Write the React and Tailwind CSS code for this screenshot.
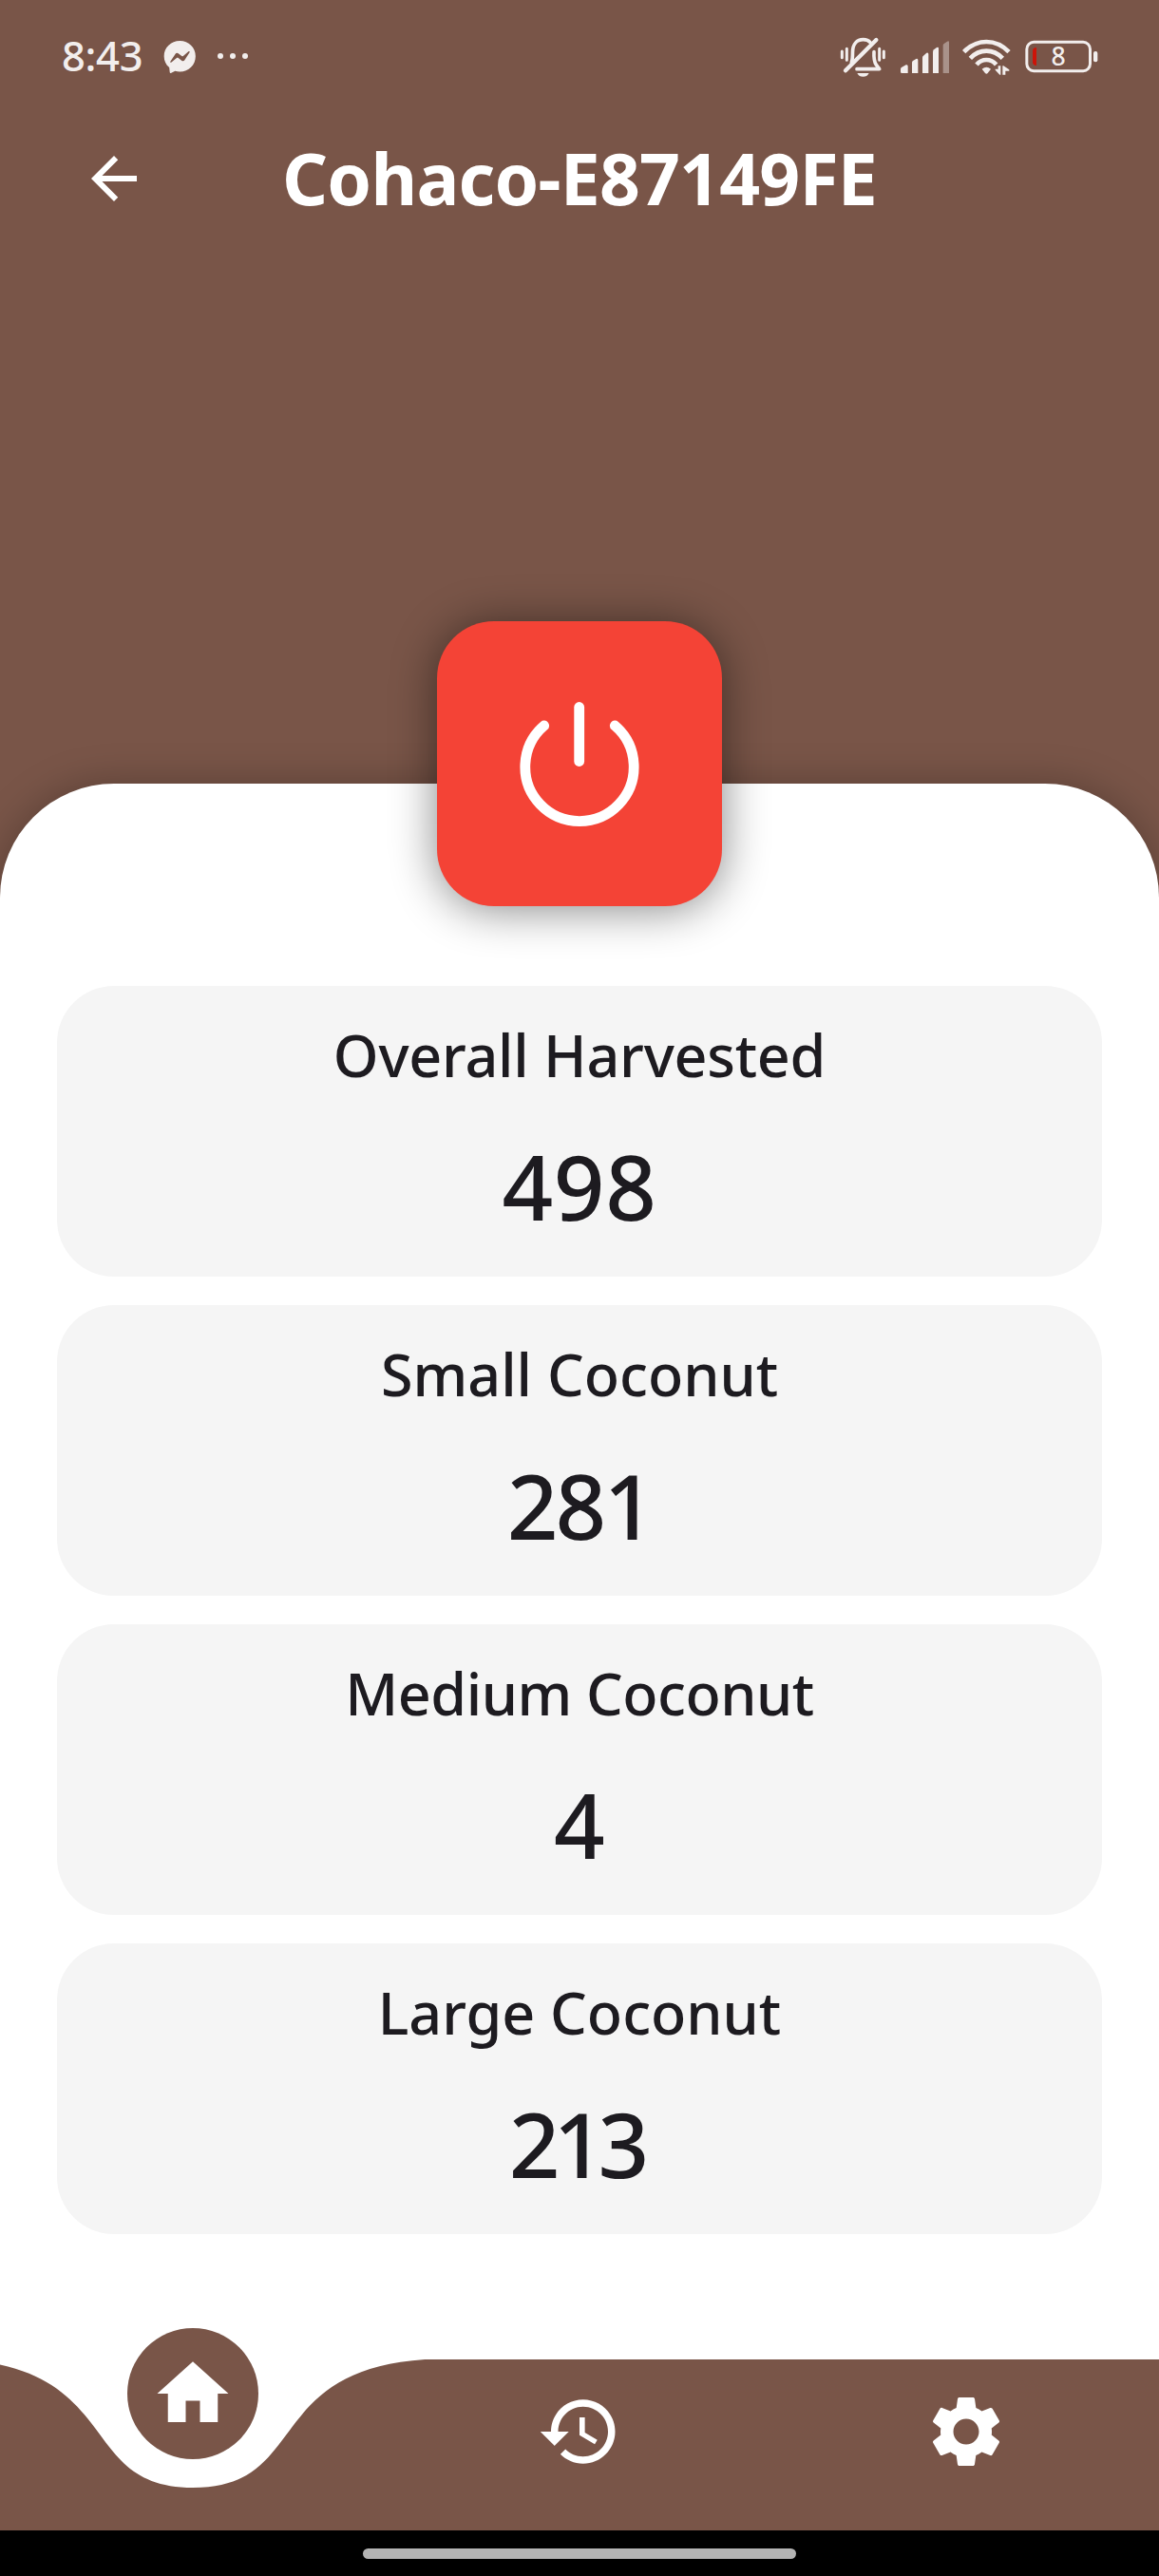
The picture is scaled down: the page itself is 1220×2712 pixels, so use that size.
import React from "react";

const STATS = [
  { label: "Overall Harvested", value: "498", labelClass: "tracking-[-0.25px]", valueClass: "tracking-[0.5px]" },
  { label: "Small Coconut", value: "281", labelClass: "", valueClass: "tracking-[-3px]" },
  { label: "Medium Coconut", value: "4", labelClass: "tracking-[-0.5px]", valueClass: "" },
  { label: "Large Coconut", value: "213", labelClass: "", valueClass: "pr-[8px] tracking-[-7px]" },
];

function MessengerIcon() {
  return (
    <svg className="ml-[22px] h-[80px] w-[34px]" viewBox="400 0 102 240">
      <path
        d="M452 69C424 69 402 90 402 117.500C402 132 408 144 418.500 153L420 167C420.300 170.500 422 171.500 425 170L437 164.500C442 166 447 166.500 452 166.500C480 166.500 501.500 145 501.500 117.500C501.500 90 480 69 452 69Z"
        fill="#f2eeed"
      />
      <path
        d="M422 134L438 110C440 106.500 444 106 447 108.500L458 117C459.500 118 461 118 462.500 117L479 103C481.500 101 484 103 482.500 105.500L467 129.500C465 133 460.500 133.500 457.500 131L447 123C445.500 122 443.500 122 442 123L425.500 136.500C423 138 420.500 136.500 422 134Z"
        fill="#795548"
      />
    </svg>
  );
}

function MutedBellIcon() {
  return (
    <svg className="h-[80px] w-[49px]" viewBox="72 0 147 240" fill="none" stroke="#f2eeed" strokeLinecap="round">
      <path d="M79 102V122M94 94V130M197 94V130M211 102V122" strokeWidth="9" />
      <path d="M109 137C112 130 112.500 124 112.500 105C112.500 79 126 65 146 65C156 65 163 68 168 74" strokeWidth="11" />
      <path d="M180 104C179 122 181 136 187 145C191 151 195 153 197 158H126" strokeWidth="11" strokeLinejoin="round" />
      <path d="M90 163L187 66" strokeWidth="13" />
      <path d="M127 171H164C160 179 154 182.500 145.500 182.500C137 182.500 131 179 127 171Z" fill="#f2eeed" stroke="none" />
    </svg>
  );
}

function SignalIcon() {
  return (
    <svg className="ml-[14px] h-[80px] w-[52px]" viewBox="261 0 156 240" fill="#f2eeed">
      <path d="M264 158Q264 154 268 152L281 145Q287 143 287 149V171H268Q264 171 264 167Z" />
      <path d="M300 138Q300 134 303 132L313 126Q319 124 319 130V171H300Z" />
      <path d="M333 122Q333 118 336 116L346 107Q352 105 352 111V171H333Z" />
      <path d="M366 104Q366 100 369 97L378 90Q384 87 384 93V171H366Z" />
      <path d="M398 84Q398 80 401 78L411 71Q417 68 417 74V171H398Z" opacity="0.4" />
    </svg>
  );
}

function WifiIcon() {
  return (
    <svg className="ml-[14px] h-[80px] w-[51px]" viewBox="459 0 153 240" fill="none" stroke="#f2eeed">
      <path d="M464 104Q495 72 535 72Q575 72 606 104" strokeWidth="14" />
      <path d="M484 124Q506 101 535 101Q564 101 586 124" strokeWidth="14" />
      <path d="M504 144Q517 129 535 129Q553 129 566 144" strokeWidth="14" />
      <path d="M521 158Q535 146 549 158L539 171Q535 176 531 171Z" fill="#f2eeed" stroke="none" />
      <path d="M563 161V158H572V148H580V176H577Z" fill="#f2eeed" stroke="none" />
      <path d="M586 176V148H589L607 160V164H595V176Z" fill="#f2eeed" stroke="none" />
    </svg>
  );
}

function BatteryIcon() {
  return (
    <svg className="ml-[15px] h-[80px] w-[77px]" viewBox="657 0 231 240">
      <rect x="662.500" y="73" width="200" height="91" rx="22" fill="none" stroke="#f2eeed" strokeWidth="9" />
      <path d="M693 90V147C685 147 681 143 681 136V101C681 94 685 90 693 90Z" fill="#cc1408" />
      <rect x="873" y="102" width="13" height="34" rx="6" fill="#f2eeed" />
      <text x="762" y="148" textAnchor="middle" fontSize="80" fontWeight="500" fill="#f2eeed">
        8
      </text>
    </svg>
  );
}

function StatusBar() {
  return (
    <div className="flex h-[120px] items-center justify-between pr-[64px] pl-[65px] text-[#f2eeed]">
      <div className="flex items-center">
        <span className="pb-[2px] text-[43.5px] leading-none font-medium tracking-[-0.3px]">8:43</span>
        <MessengerIcon />
        <div className="ml-[23px] flex gap-[7px] pb-[2px]">
          <span className="size-[6px] rounded-full bg-[#f2eeed]" />
          <span className="size-[6px] rounded-full bg-[#f2eeed]" />
          <span className="size-[6px] rounded-full bg-[#f2eeed]" />
        </div>
      </div>
      <div className="flex items-center">
        <MutedBellIcon />
        <SignalIcon />
        <WifiIcon />
        <BatteryIcon />
      </div>
    </div>
  );
}

function AppBar() {
  return (
    <header className="mt-[18px] grid h-[100px] grid-cols-[72px_1fr_72px] items-center px-[84px]">
      <svg className="size-[72px]" viewBox="0 0 24 24" fill="#ffffff">
        <path d="M20 11H7.830l5.590-5.590L12 4l-8 8 8 8 1.410-1.410L7.830 13H20v-2z" />
      </svg>
      <h1 className="pb-[2px] text-center text-[75px] leading-none font-bold tracking-[-0.8px] whitespace-nowrap text-white">
        Cohaco-E87149FE
      </h1>
    </header>
  );
}

function PowerButton() {
  return (
    <button className="-mt-[171px] flex size-[300px] items-center justify-center rounded-[60px] bg-[#F44336] shadow-[0_3px_48px_rgba(0,0,0,0.48)]">
      <svg className="size-[150px]" viewBox="535 729 150 150" fill="none" stroke="#ffffff" strokeWidth="10.800" strokeLinecap="round">
        <path d="M609.700 744.500V801.500" />
        <path d="M572.700 764A57.200 57.200 0 1 0 647.300 764" />
      </svg>
    </button>
  );
}

function StatCard({ label, value, labelClass, valueClass }) {
  return (
    <div className="flex h-[306px] flex-col items-center rounded-[60px] bg-[#F5F5F5] pt-[33px] text-[#1D1B20]">
      <div className={"text-[61px] leading-[80px] font-medium " + labelClass}>{label}</div>
      <div className={"mt-[38px] text-[94px] leading-[120px] font-medium " + valueClass}>{value}</div>
    </div>
  );
}

function BottomNav() {
  return (
    <nav className="relative h-[180px] shrink-0">
      <svg className="absolute inset-0 h-[180px] w-[1220px]" viewBox="0 0 1220 180">
        <path
          d="M-40.670 0C130.130 11.250 81.330 135 203.330 135C325.330 135 276.530 11.250 447.330 0H1220V180H-50V0Z"
          fill="#795548"
        />
      </svg>
      <div className="relative grid h-full grid-cols-3 justify-items-center">
        <div className="-mt-[33px] flex size-[138px] items-center justify-center rounded-full bg-[#795548]">
          <svg className="size-[90px]" viewBox="0 0 24 24" fill="#ffffff">
            <path d="M10 20v-6h4v6h5v-8h3L12 3 2 12h3v8z" />
          </svg>
        </div>
        <svg className="mt-[31px] size-[90px]" viewBox="0 0 24 24" fill="#ffffff">
          <path d="M13 3c-4.970 0-9 4.030-9 9H1l3.890 3.890.070.140L9 12H6c0-3.870 3.130-7 7-7s7 3.130 7 7-3.130 7-7 7c-1.930 0-3.680-.790-4.940-2.060l-1.420 1.420C8.270 19.990 10.510 21 13 21c4.970 0 9-4.030 9-9s-4.030-9-9-9zm-1 5v5l4.280 2.540.720-1.210-3.500-2.080V8H12z" />
        </svg>
        <svg className="mt-[31px] size-[90px]" viewBox="0 0 24 24" fill="#ffffff">
          <path d="M19.140 12.940c.040-.3.060-.610.060-.940 0-.320-.020-.640-.070-.940l2.030-1.580c.180-.140.230-.410.120-.610l-1.920-3.320c-.120-.220-.370-.290-.590-.220l-2.390.960c-.5-.380-1.030-.7-1.620-.940l-.360-2.540c-.040-.240-.240-.410-.480-.410h-3.840c-.240 0-.430.170-.470.410l-.360 2.540c-.590.240-1.130.570-1.620.940l-2.390-.960c-.220-.080-.470 0-.590.220L2.740 8.870c-.120.210-.080.470.120.610l2.030 1.580c-.050.3-.090.630-.090.940s.020.640.070.940l-2.030 1.580c-.180.140-.230.410-.120.610l1.920 3.320c.120.220.370.290.590.220l2.390-.960c.5.380 1.030.7 1.620.940l.360 2.540c.050.240.240.410.480.410h3.840c.240 0 .440-.170.470-.410l.360-2.540c.590-.240 1.130-.560 1.620-.940l2.390.960c.220.080.470 0 .590-.220l1.920-3.320c.120-.220.070-.470-.120-.610l-2.010-1.580zM12 15.600c-1.980 0-3.600-1.620-3.600-3.600s1.620-3.600 3.600-3.600 3.600 1.620 3.600 3.600-1.620 3.600-3.600 3.600z" />
        </svg>
      </div>
    </nav>
  );
}

export default function App() {
  return (
    <div className="flex h-[2712px] w-[1220px] flex-col overflow-hidden bg-[#795548] font-['Noto_Sans','Open_Sans',sans-serif]">
      <div className="h-[825px] shrink-0">
        <StatusBar />
        <AppBar />
      </div>
      <main className="flex h-[1659px] shrink-0 flex-col items-center rounded-t-[120px] bg-white shadow-[0_0_42px_rgba(0,0,0,0.26)]">
        <PowerButton />
        <section className="mt-[84px] flex w-[1100px] flex-col gap-[30px]">
          {STATS.map((stat) => (
            <StatCard key={stat.label} {...stat} />
          ))}
        </section>
      </main>
      <div className="shrink-0 bg-white">
        <BottomNav />
      </div>
      <div className="flex h-[48px] shrink-0 justify-center bg-black pt-[19px]">
        <div className="h-[11px] w-[456px] rounded-full bg-[#b3b3b3]" />
      </div>
    </div>
  );
}
